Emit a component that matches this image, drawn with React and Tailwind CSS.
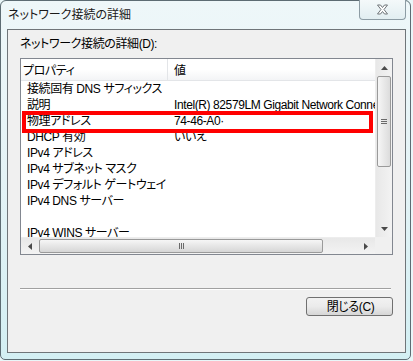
import React from 'react';

const font = "font-['Liberation_Sans','Noto_Sans_CJK_JP',sans-serif] [font-feature-settings:'palt']";

const rows = [
    ['接続固有 DNS サフィックス', ''],
    ['説明', 'Intel(R) 82579LM Gigabit Network Connection'],
    ['物理アドレス', '74-46-A0·'],
    ['DHCP 有効', 'いいえ'],
    ['IPv4 アドレス', ''],
    ['IPv4 サブネット マスク', ''],
    ['IPv4 デフォルト ゲートウェイ', ''],
    ['IPv4 DNS サーバー', ''],
    ['', ''],
    ['IPv4 WINS サーバー', ''],
];

function Arrow({ dir }) {
    const pts = {
        up: '0,4 7,4 3.5,0',
        down: '0,0 7,0 3.5,4',
        left: '4,0 4,7 0,3.5',
        right: '0,0 0,7 4,3.5',
    }[dir];
    const horiz = dir === 'left' || dir === 'right';
    return (
        <svg width={horiz ? 4 : 7} height={horiz ? 7 : 4} viewBox={horiz ? '0 0 4 7' : '0 0 7 4'}>
            <polygon points={pts} fill="#4a4a4a" />
        </svg>
    );
}

export default function App() {
    return (
        <div className={`w-[413px] h-[361px] bg-[#e9f6f8] text-[12px] leading-[14px] text-black ${font}`}>
            <div className="w-[411px] h-[360px] flex flex-col rounded-t-[6px] rounded-b-[5px] border border-[#5d6c73] bg-gradient-to-b from-[#eef7f9] via-[#e4f3f6] to-[#d3eff3] pl-[6px] pr-[4px] pb-[6px]">
                {/* title bar */}
                <div className="h-[28px] flex justify-between items-start">
                    <div className="pt-[7px] pl-[1px] text-[#1a1a1a] [text-shadow:0_0_6px_#ffffff]">ネットワーク接続の詳細</div>
                    <div className="-mt-[1px] w-[47px] h-[20px] rounded-b-[4px] border border-t-0 border-[#8d9ca4] bg-gradient-to-b from-[#f4f9fa] to-[#e2eef1] flex items-center justify-center">
                        <svg width="13" height="11" viewBox="0 0 13 11">
                            <path d="M1.5 1 L4.5 1 L6.5 3.5 L8.5 1 L11.5 1 L8 5.5 L11.5 10 L8.5 10 L6.5 7.5 L4.5 10 L1.5 10 L5 5.5 Z" fill="#ffffff" stroke="#6e7478" strokeWidth="1" />
                        </svg>
                    </div>
                </div>

                {/* client area */}
                <div className="flex-1 border border-[#6f7579] bg-[#f0f0f0] flex flex-col px-[12px] tracking-[-0.4px]">
                    <div className="pt-[7px] h-[28px]">ネットワーク接続の詳細(D):</div>

                    {/* list box */}
                    <div className="w-[373px] h-[197px] border border-[#828790] bg-white grid grid-cols-[354px_17px] grid-rows-[178px_17px]">
                        <div className="relative overflow-hidden">
                            <div className="h-[22px] flex bg-gradient-to-b from-white via-white to-[#f3f4f6] border-b border-[#e3e5e8]">
                                <div className="w-[147px] pl-[2px] pt-[5px] border-r border-[#e3e5e8]">プロパティ</div>
                                <div className="pl-[6px] pt-[5px]">値</div>
                            </div>
                            {rows.map(([name, value], i) => (
                                <div key={i} className="h-[16px] flex items-center whitespace-nowrap">
                                    <div className="w-[147px] shrink-0 pl-[6px]">{name}</div>
                                    <div className="pl-[6px]">{value}</div>
                                </div>
                            ))}
                            <div className="absolute left-[1px] top-[52px] w-[351px] h-[22px] border-[4px] border-[#ff0000]" />
                        </div>

                        {/* vertical scrollbar */}
                        <div className="flex flex-col bg-gradient-to-r from-[#e8e8e8] to-[#f3f3f3] border-l border-[#ededed]">
                            <div className="h-[17px] flex items-center justify-center"><Arrow dir="up" /></div>
                            <div className="mx-[1px] h-[91px] rounded-[2px] border border-[#9a9a9a] bg-gradient-to-r from-[#f6f6f6] to-[#dcdcdc] flex items-center justify-center">
                                <div className="w-[6px] flex flex-col gap-[1px]">
                                    <div className="h-[1px] bg-[#6a6a6a]" />
                                    <div className="h-[1px] bg-[#6a6a6a]" />
                                    <div className="h-[1px] bg-[#6a6a6a]" />
                                </div>
                            </div>
                            <div className="flex-1" />
                            <div className="h-[17px] flex items-center justify-center"><Arrow dir="down" /></div>
                        </div>

                        {/* horizontal scrollbar */}
                        <div className="flex bg-gradient-to-b from-[#e8e8e8] to-[#f3f3f3] border-t border-[#ededed]">
                            <div className="w-[18px] flex items-center justify-center"><Arrow dir="left" /></div>
                            <div className="my-[1px] w-[284px] rounded-[2px] border border-[#9a9a9a] bg-gradient-to-b from-[#f6f6f6] to-[#d6d6d6] flex items-center justify-center">
                                <div className="h-[6px] flex gap-[1px]">
                                    <div className="w-[1px] bg-[#6a6a6a]" />
                                    <div className="w-[1px] bg-[#6a6a6a]" />
                                    <div className="w-[1px] bg-[#6a6a6a]" />
                                </div>
                            </div>
                            <div className="flex-1" />
                            <div className="w-[18px] flex items-center justify-center"><Arrow dir="right" /></div>
                        </div>
                        <div className="bg-[#f0f0f0]" />
                    </div>

                    <div className="mt-[33px] w-[371px] h-[2px] border-t border-[#a0a0a0] border-b border-b-white" />

                    <div className="mt-[7px] flex justify-end">
                        <button className="w-[87px] h-[19px] rounded-[3px] border border-[#707070] bg-gradient-to-b from-[#f2f2f2] via-[#ebebeb] to-[#d6d6d6] flex items-center justify-center pl-[2px]">
                            閉じる(C)
                        </button>
                    </div>
                </div>
            </div>
        </div>
    );
}
